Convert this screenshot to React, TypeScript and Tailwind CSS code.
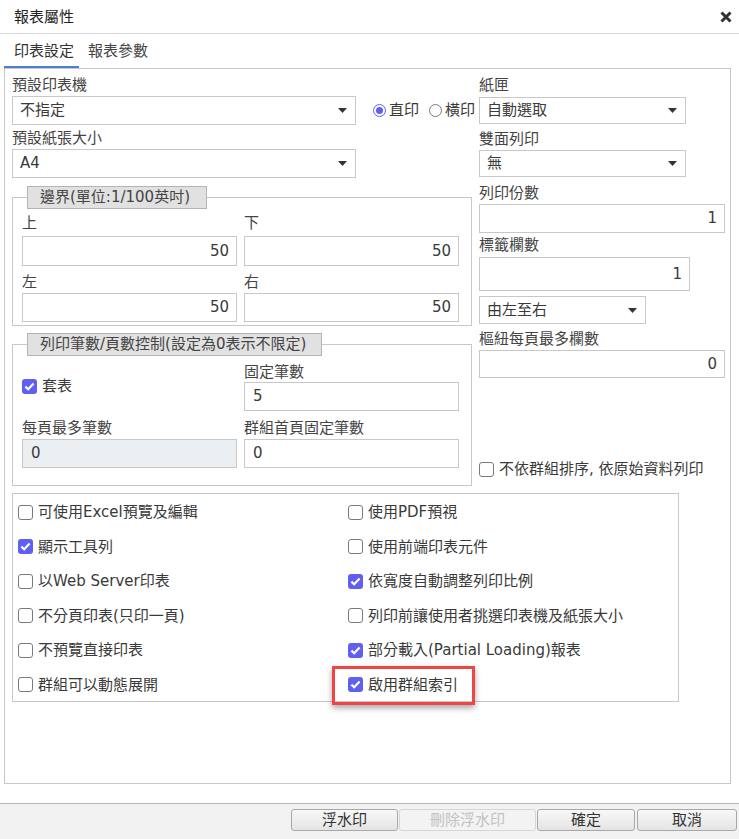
import React from 'react';

function Caret() {
  return (
    <svg width="9" height="5" viewBox="0 0 9 5" className="shrink-0">
      <path d="M0 0h9L4.5 5z" fill="#333" />
    </svg>
  );
}

function Check({ checked = false }: { checked?: boolean }) {
  if (checked) {
    return (
      <span className="w-[15px] h-[15px] rounded-[3px] bg-[#5f5ff2] flex items-center justify-center shrink-0">
        <svg width="11" height="9" viewBox="0 0 11 9">
          <path d="M1.4 4.6 4.2 7.3 9.6 1.6" fill="none" stroke="#fff" strokeWidth="2.2" />
        </svg>
      </span>
    );
  }
  return <span className="w-[15px] h-[15px] rounded-[3px] border-[1.5px] border-[#7a7a7a] bg-white shrink-0" />;
}

function Radio({ checked = false }: { checked?: boolean }) {
  if (checked) {
    return (
      <span className="w-[13px] h-[13px] rounded-full border-[1.5px] border-[#5f5ff2] flex items-center justify-center shrink-0">
        <span className="w-[7px] h-[7px] rounded-full bg-[#5f5ff2]" />
      </span>
    );
  }
  return <span className="w-[13px] h-[13px] rounded-full border-[1.5px] border-[#7a7a7a] shrink-0" />;
}

function Select({ value, className }: { value: string; className: string }) {
  return (
    <div className={`shrink-0 border border-[#c8c8c8] flex items-center justify-between pl-[7px] pr-[8px] ${className}`}>
      <span>{value}</span>
      <Caret />
    </div>
  );
}

function Field({ value, className, left = false }: { value: string; className: string; left?: boolean }) {
  return (
    <div
      className={`border border-[#c8c8c8] flex items-center ${left ? 'justify-start pl-[8px]' : 'justify-end pr-[7px]'} ${className}`}
    >
      {value}
    </div>
  );
}

function Label({ text, className = '' }: { text: string; className?: string }) {
  return <div className={`leading-[20px] whitespace-nowrap text-[#444] ${className}`}>{text}</div>;
}

const options: [string, boolean][] = [
  ['可使用Excel預覽及編輯', false],
  ['使用PDF預視', false],
  ['顯示工具列', true],
  ['使用前端印表元件', false],
  ['以Web Server印表', false],
  ['依寬度自動調整列印比例', true],
  ['不分頁印表(只印一頁)', false],
  ['列印前讓使用者挑選印表機及紙張大小', false],
  ['不預覽直接印表', false],
  ['部分載入(Partial Loading)報表', true],
  ['群組可以動態展開', false],
  ['啟用群組索引', true],
];

export default function App() {
  return (
    <div className="w-[739px] h-[839px] bg-white flex flex-col text-[15px] text-[#3a3a3a] font-['DejaVu_Sans','Noto_Sans_CJK_TC',sans-serif]">
      {/* title bar */}
      <div className="h-[34px] shrink-0 border-b border-[#dcdcdc] flex items-center justify-between pl-[14px] pr-[7px]">
        <span className="leading-[20px] text-[#222]">報表屬性</span>
        <svg width="12" height="12" viewBox="0 0 12 12">
          <path d="M1.5 1.5l9 9M10.5 1.5l-9 9" stroke="#333" strokeWidth="3" />
        </svg>
      </div>

      {/* tabs */}
      <div className="h-[34px] shrink-0 flex items-stretch pt-[3px]">
        <div className="ml-[4px] w-[75px] pl-[10px] flex items-center border-b-2 border-[#4a7fd9] text-[#333]">印表設定</div>
        <div className="pl-[9px] pb-[2px] flex items-center text-[#444]">報表參數</div>
      </div>

      {/* content panel */}
      <div className="ml-[4px] w-[727px] h-[716px] shrink-0 border border-[#c6c6c6] pl-[7px] pt-[6px] flex flex-col">
        <div className="flex gap-[7px]">
          {/* left column */}
          <div className="w-[460px] shrink-0 flex flex-col">
            <Label text="預設印表機" />
            <div className="mt-[1px] flex items-center whitespace-nowrap">
              <Select value="不指定" className="w-[344px] h-[29px]" />
              <div className="ml-[17px] flex items-center gap-[3px]">
                <Radio checked />
                <span>直印</span>
                <span className="ml-[4px]" />
                <Radio />
                <span>橫印</span>
              </div>
            </div>
            <Label text="預設紙張大小" className="mt-[3px]" />
            <Select value="A4" className="mt-[1px] w-[344px] h-[29px]" />

            <fieldset className="mt-[8px] border border-[#c8c8c8] pl-[9px] pr-[12px] pb-[3px]">
              <legend className="ml-[5px] w-[180px] h-[23px] pl-[12px] bg-[#e1e1e1] border border-[#b4b4b4] leading-[21px] text-[#444] whitespace-nowrap">
                邊界(單位:1/100英吋)
              </legend>
              <div className="grid grid-cols-[215px_215px] gap-x-[7px]">
                <Label text="上" className="mt-[4px] mb-[3px]" />
                <Label text="下" className="mt-[4px] mb-[3px]" />
                <Field value="50" className="h-[30px]" />
                <Field value="50" className="h-[30px]" />
                <Label text="左" className="mt-[6px] mb-[1px]" />
                <Label text="右" className="mt-[6px] mb-[1px]" />
                <Field value="50" className="h-[29px]" />
                <Field value="50" className="h-[29px]" />
              </div>
            </fieldset>

            <fieldset className="mt-[7px] border border-[#c8c8c8] pl-[9px] pr-[12px] pb-[17px]">
              <legend className="ml-[5px] w-[295px] h-[23px] pl-[12px] bg-[#e1e1e1] border border-[#b4b4b4] leading-[21px] text-[#444] whitespace-nowrap">
                列印筆數/頁數控制(設定為0表示不限定)
              </legend>
              <div className="grid grid-cols-[215px_215px] gap-x-[7px] items-start">
                <div className="pt-[20px]">
                  <div className="h-[20px] flex items-center gap-[5px]">
                    <Check checked />
                    <span>套表</span>
                  </div>
                </div>
                <div className="flex flex-col">
                  <Label text="固定筆數" className="mt-[6px]" />
                  <Field value="5" left className="h-[29px]" />
                </div>
                <div className="flex flex-col">
                  <Label text="每頁最多筆數" className="mt-[7px] mb-[1px]" />
                  <Field value="0" left className="h-[29px] bg-[#eceff1]" />
                </div>
                <div className="flex flex-col">
                  <Label text="群組首頁固定筆數" className="mt-[7px] mb-[1px]" />
                  <Field value="0" left className="h-[29px]" />
                </div>
              </div>
            </fieldset>
          </div>

          {/* right column */}
          <div className="w-[246px] shrink-0 flex flex-col">
            <Label text="紙匣" />
            <Select value="自動選取" className="mt-[2px] w-[207px] h-[27px]" />
            <Label text="雙面列印" className="mt-[5px]" />
            <Select value="無" className="mt-[1px] w-[207px] h-[27px]" />
            <Label text="列印份數" className="mt-[6px]" />
            <Field value="1" className="mt-[1px] h-[29px]" />
            <Label text="標籤欄數" className="mt-[2px]" />
            <Field value="1" className="mt-[2px] w-[211px] h-[34px]" />
            <Select value="由左至右" className="mt-[5px] w-[167px] h-[28px]" />
            <Label text="樞紐每頁最多欄數" className="mt-[5px]" />
            <Field value="0" className="mt-[1px] h-[28px]" />
            <div className="mt-[81px] h-[20px] flex items-center gap-[5px] whitespace-nowrap">
              <Check />
              <span>不依群組排序, 依原始資料列印</span>
            </div>
          </div>
        </div>

        {/* options */}
        <div className="relative mt-[7px] w-[667px] h-[209px] border border-[#c8c8c8] pl-[5px] pt-[1px] grid grid-cols-[330px_1fr] content-start">
          {options.map(([text, checked]) => (
            <div key={text} className="h-[34.5px] flex items-center gap-[5px] whitespace-nowrap">
              <Check checked={checked} />
              <span>{text}</span>
            </div>
          ))}
          <div className="absolute left-[319px] top-[172px] w-[143px] h-[39px] border-[3px] border-[#ef4545] shadow-[0_3px_6px_rgba(0,0,0,0.35)]" />
        </div>
      </div>

      {/* footer */}
      <div className="mt-[19px] h-[36px] shrink-0 border-t border-[#b8b8b8] bg-[#f2f2f2] flex justify-end items-start pt-[5px] pr-[2px]">
        <button className="w-[107px] h-[22px] border border-[#a8a8a8] rounded-[3px] bg-linear-to-b from-[#f8f8f8] to-[#e4e4e4] text-[#333] leading-[20px]">
          浮水印
        </button>
        <button className="ml-[1px] w-[137px] h-[22px] border border-[#d6d6d6] rounded-[3px] bg-[#f3f3f3] text-[#c2c2c2] leading-[20px]">
          刪除浮水印
        </button>
        <button className="ml-[1px] w-[98px] h-[22px] border border-[#a8a8a8] rounded-[3px] bg-linear-to-b from-[#f8f8f8] to-[#e4e4e4] text-[#333] leading-[20px]">
          確定
        </button>
        <button className="ml-[2px] w-[100px] h-[22px] border border-[#a8a8a8] rounded-[3px] bg-linear-to-b from-[#f8f8f8] to-[#e4e4e4] text-[#333] leading-[20px]">
          取消
        </button>
      </div>
    </div>
  );
}
